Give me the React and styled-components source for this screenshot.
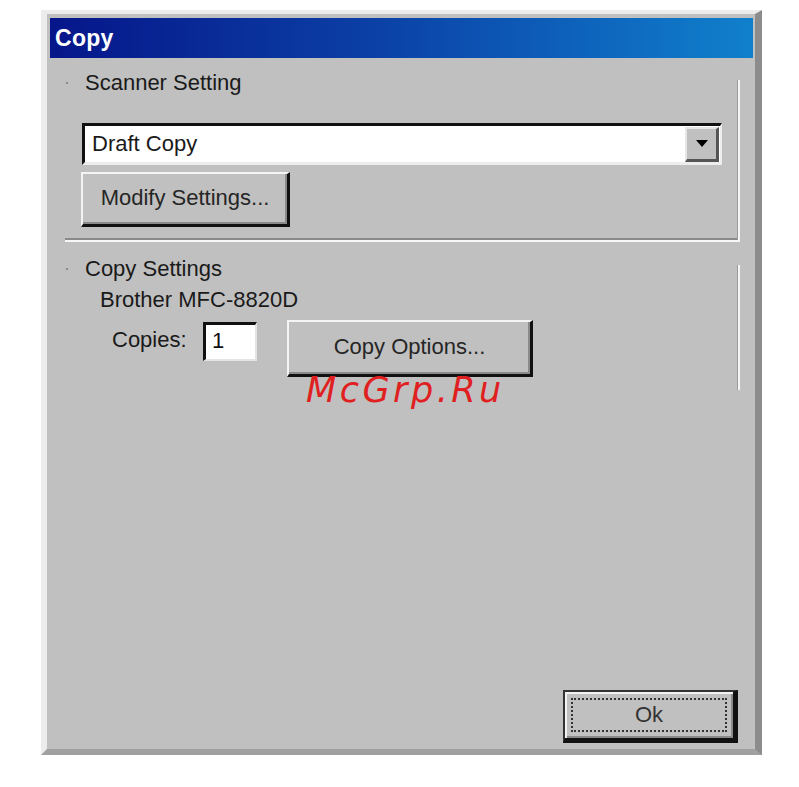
import React from "react";
import styled, { createGlobalStyle } from "styled-components";

const GlobalStyle = createGlobalStyle`
  html, body {
    margin: 0;
    padding: 0;
    background: #fff;
  }
  body {
    font-family: "Liberation Sans", Arial, sans-serif;
  }
`;

const Page = styled.div`
  padding: 10px 0 0 41px;
`;

const Window = styled.div`
  position: relative;
  box-sizing: border-box;
  width: 721px;
  height: 745px;
  background: #c0c0c0;
  border-top: 4px solid #ececec;
  border-left: 6px solid #ececec;
  border-right: 7px solid #8c8c8c;
  border-bottom: 6px solid #a0a0a0;
  padding: 4px 2px 0 3px;
  display: flex;
  flex-direction: column;
`;

const TitleBar = styled.div`
  height: 40px;
  display: flex;
  align-items: center;
  padding-left: 5px;
  background: linear-gradient(90deg, #06168a 0%, #0b3fa6 45%, #1080cc 100%);
  color: #fff;
  font-size: 23px;
  font-weight: bold;
  letter-spacing: 0.3px;
`;

const Body = styled.div`
  flex: 1;
  display: flex;
  flex-direction: column;
  padding: 0 13px 6px 15px;
`;

const Group = styled.div`
  position: relative;
  margin-top: ${(p) => p.$top}px;
  padding-bottom: ${(p) => p.$bottom}px;
  border-bottom: ${(p) => (p.$line ? "2px solid #8a8a8a" : "none")};
  box-shadow: ${(p) => (p.$line ? "0 2px 0 #f6f6f6" : "none")};

  &::after {
    content: "";
    position: absolute;
    right: 0;
    top: ${(p) => p.$edge}px;
    bottom: ${(p) => (p.$line ? "-2px" : "0")};
    width: 2px;
    border-left: 1px solid #9a9a9a;
    background: #f6f6f6;
  }
`;

const Header = styled.div`
  display: flex;
  align-items: center;
  height: 24px;
  padding-left: 1px;
  gap: 17px;
  font-size: 22px;
  color: #1a1a1a;
`;

const Dot = styled.span`
  width: 2px;
  height: 2px;
  background: #8a8a8a;
`;

const Select = styled.div`
  box-sizing: border-box;
  height: 42px;
  margin: 28px 18px 0 17px;
  background: #fff;
  border-top: 3px solid #111;
  border-left: 3px solid #111;
  border-right: 2px solid #ededed;
  border-bottom: 3px solid #ededed;
  display: flex;
  align-items: center;
  justify-content: space-between;
  font-size: 22px;
  color: #1a1a1a;
  padding-left: 7px;
`;

const SelectArrow = styled.div`
  box-sizing: border-box;
  width: 34px;
  height: 35px;
  margin-right: 1px;
  background: #c0c0c0;
  border-top: 2px solid #e6e6e6;
  border-left: 2px solid #e6e6e6;
  border-right: 3px solid #555;
  border-bottom: 3px solid #555;
  display: flex;
  align-items: center;
  justify-content: center;
`;

const Button = styled.div`
  box-sizing: border-box;
  width: ${(p) => p.$w}px;
  height: ${(p) => p.$h}px;
  margin-left: ${(p) => p.$left || 0}px;
  margin-top: ${(p) => p.$top || 0}px;
  background: #c0c0c0;
  border-top: 2px solid #f4f4f4;
  border-left: 2px solid #f4f4f4;
  border-right: 3px solid #111;
  border-bottom: 3px solid #111;
  box-shadow: inset -2px -2px 0 #8a8a8a;
  display: flex;
  align-items: center;
  justify-content: center;
  font-size: 22px;
  color: #262626;
  padding-bottom: 2px;
`;

const InfoLine = styled.div`
  height: 24px;
  margin-top: 6px;
  padding-left: 35px;
  font-size: 22px;
  color: #1a1a1a;
`;

const CopiesRow = styled.div`
  display: flex;
  align-items: flex-start;
  margin-top: 9px;
  padding-left: 47px;
`;

const Label = styled.span`
  margin-top: 7px;
  width: 91px;
  font-size: 22px;
  color: #1a1a1a;
`;

const NumberBox = styled.div`
  box-sizing: border-box;
  width: 54px;
  height: 39px;
  margin-top: 2px;
  margin-right: 30px;
  background: #fff;
  border-top: 3px solid #111;
  border-left: 3px solid #111;
  border-right: 2px solid #e4e4e4;
  border-bottom: 2px solid #e4e4e4;
  padding: 3px 0 0 6px;
  font-size: 22px;
  color: #111;
`;

const Footer = styled.div`
  margin-top: auto;
  display: flex;
  justify-content: flex-end;
  padding-right: 2px;
`;

const OkButton = styled.div`
  box-sizing: border-box;
  width: 175px;
  height: 53px;
  background: #c0c0c0;
  border-top: 2px solid #333;
  border-left: 2px solid #333;
  border-right: 5px solid #111;
  border-bottom: 5px solid #111;
  box-shadow: inset 2px 2px 0 #f2f2f2, inset -2px -2px 0 #8a8a8a;
  padding: 6px;
  display: flex;
`;

const Focus = styled.div`
  flex: 1;
  border: 2px dotted #333;
  display: flex;
  align-items: center;
  justify-content: center;
  font-size: 22px;
  color: #333;
`;

const Watermark = styled.div`
  position: absolute;
  left: 259px;
  top: 356px;
  font-family: "DejaVu Sans", Verdana, sans-serif;
  font-style: italic;
  font-size: 35px;
  letter-spacing: 3.5px;
  color: #e02020;
  pointer-events: none;
`;

export default function App() {
  return (
    <Page>
      <GlobalStyle />
      <Window>
        <TitleBar>Copy</TitleBar>
        <Body>
          <Group $top={13} $bottom={11} $edge={9} $line>
            <Header>
              <Dot />
              Scanner Setting
            </Header>
            <Select>
              Draft Copy
              <SelectArrow>
                <svg width="12" height="7" viewBox="0 0 12 7">
                  <path d="M0 0 H12 L6 7 Z" fill="#000" />
                </svg>
              </SelectArrow>
            </Select>
            <Button $w={209} $h={55} $left={16} $top={7}>
              Modify Settings...
            </Button>
          </Group>
          <Group $top={17} $bottom={13} $edge={8}>
            <Header>
              <Dot />
              Copy Settings
            </Header>
            <InfoLine>Brother MFC-8820D</InfoLine>
            <CopiesRow>
              <Label>Copies:</Label>
              <NumberBox>1</NumberBox>
              <Button $w={246} $h={57}>
                Copy Options...
              </Button>
            </CopiesRow>
          </Group>
          <Footer>
            <OkButton>
              <Focus>Ok</Focus>
            </OkButton>
          </Footer>
        </Body>
        <Watermark>McGrp.Ru</Watermark>
      </Window>
    </Page>
  );
}
